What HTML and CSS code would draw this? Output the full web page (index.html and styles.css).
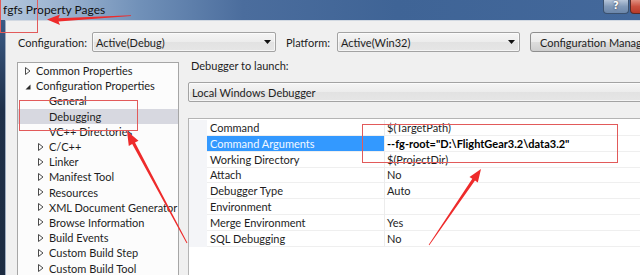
FILE: index.html
```html
<!DOCTYPE html>
<html lang="en">
<head>
    <meta charset="UTF-8">
    <meta name="viewport" content="width=device-width, initial-scale=1.0">
    <title>fgfs Property Pages</title>
    <link rel="stylesheet" href="styles.css">
</head>
<body>
<div class="window">

    <!-- Title bar -->
    <div class="titlebar">
        <span class="title">fgfs Property Pages</span>
        <div class="caption-buttons">
            <span class="btn-help">?</span>
            <span class="btn-close"></span>
        </div>
    </div>

    <div class="frame">
        <div class="dialog">

            <!-- Configuration / platform row -->
            <div class="config-row">
                <span class="config-label">Configuration:</span>
                <div class="combo combo-config">
                    <span class="combo-text">Active(Debug)</span>
                    <svg class="drop" width="7" height="4" viewBox="0 0 7 4"><path d="M0 0H7L3.5 4Z" fill="#111"/></svg>
                </div>
                <span class="platform-label">Platform:</span>
                <div class="combo combo-platform">
                    <span class="combo-text">Active(Win32)</span>
                    <svg class="drop" width="7" height="4" viewBox="0 0 7 4"><path d="M0 0H7L3.5 4Z" fill="#111"/></svg>
                </div>
                <button class="config-manager">Configuration Manager...</button>
            </div>

            <div class="main">
                <!-- Property tree -->
                <ul class="tree">
                    <li class="node lvl0"><span class="twisty"><svg width="6" height="8" viewBox="0 0 6 8"><path d="M0.5 0.5L5 4L0.5 7.5Z" fill="none" stroke="#4a4a4a"/></svg></span>Common Properties</li>
                    <li class="node lvl0"><span class="twisty open"><svg width="6" height="6" viewBox="0 0 6 6"><path d="M5.5 0.5V5.5H0.5Z" fill="#2a2a2a"/></svg></span>Configuration Properties</li>
                    <li class="node lvl1"><span class="twisty"></span>General</li>
                    <li class="node lvl1 selected"><span class="twisty"></span>Debugging</li>
                    <li class="node lvl1"><span class="twisty"></span>VC++ Directories</li>
                    <li class="node lvl1"><span class="twisty"><svg width="6" height="8" viewBox="0 0 6 8"><path d="M0.5 0.5L5 4L0.5 7.5Z" fill="none" stroke="#4a4a4a"/></svg></span>C/C++</li>
                    <li class="node lvl1"><span class="twisty"><svg width="6" height="8" viewBox="0 0 6 8"><path d="M0.5 0.5L5 4L0.5 7.5Z" fill="none" stroke="#4a4a4a"/></svg></span>Linker</li>
                    <li class="node lvl1"><span class="twisty"><svg width="6" height="8" viewBox="0 0 6 8"><path d="M0.5 0.5L5 4L0.5 7.5Z" fill="none" stroke="#4a4a4a"/></svg></span>Manifest Tool</li>
                    <li class="node lvl1"><span class="twisty"><svg width="6" height="8" viewBox="0 0 6 8"><path d="M0.5 0.5L5 4L0.5 7.5Z" fill="none" stroke="#4a4a4a"/></svg></span>Resources</li>
                    <li class="node lvl1"><span class="twisty"><svg width="6" height="8" viewBox="0 0 6 8"><path d="M0.5 0.5L5 4L0.5 7.5Z" fill="none" stroke="#4a4a4a"/></svg></span>XML Document Generator</li>
                    <li class="node lvl1"><span class="twisty"><svg width="6" height="8" viewBox="0 0 6 8"><path d="M0.5 0.5L5 4L0.5 7.5Z" fill="none" stroke="#4a4a4a"/></svg></span>Browse Information</li>
                    <li class="node lvl1"><span class="twisty"><svg width="6" height="8" viewBox="0 0 6 8"><path d="M0.5 0.5L5 4L0.5 7.5Z" fill="none" stroke="#4a4a4a"/></svg></span>Build Events</li>
                    <li class="node lvl1"><span class="twisty"><svg width="6" height="8" viewBox="0 0 6 8"><path d="M0.5 0.5L5 4L0.5 7.5Z" fill="none" stroke="#4a4a4a"/></svg></span>Custom Build Step</li>
                    <li class="node lvl1"><span class="twisty"><svg width="6" height="8" viewBox="0 0 6 8"><path d="M0.5 0.5L5 4L0.5 7.5Z" fill="none" stroke="#4a4a4a"/></svg></span>Custom Build Tool</li>
                </ul>

                <!-- Debugging page -->
                <div class="page">
                    <div class="launch-label">Debugger to launch:</div>
                    <div class="combo combo-debugger">
                        <span class="combo-text">Local Windows Debugger</span>
                    </div>
                    <div class="grid">
                        <div class="grid-row"><span class="gutter"></span><span class="name">Command</span><span class="value">$(TargetPath)</span></div>
                        <div class="grid-row active"><span class="gutter"></span><span class="name">Command Arguments</span><span class="value">--fg-root="D:\FlightGear3.2\data3.2"</span></div>
                        <div class="grid-row"><span class="gutter"></span><span class="name">Working Directory</span><span class="value">$(ProjectDir)</span></div>
                        <div class="grid-row"><span class="gutter"></span><span class="name">Attach</span><span class="value">No</span></div>
                        <div class="grid-row"><span class="gutter"></span><span class="name">Debugger Type</span><span class="value">Auto</span></div>
                        <div class="grid-row"><span class="gutter"></span><span class="name">Environment</span><span class="value"></span></div>
                        <div class="grid-row"><span class="gutter"></span><span class="name">Merge Environment</span><span class="value">Yes</span></div>
                        <div class="grid-row"><span class="gutter"></span><span class="name">SQL Debugging</span><span class="value">No</span></div>
                    </div>
                </div>
            </div>
        </div>
    </div>

    <!-- Red annotation marks drawn over the screenshot -->
    <svg class="marks" width="640" height="275" viewBox="0 0 640 275">
        <g fill="none" stroke="#e25a5a" stroke-width="1">
            <rect x="0.5" y="-2" width="37" height="34.5"/>
            <rect x="19.5" y="100.5" width="118" height="30"/>
            <rect x="362.5" y="124.5" width="255" height="38"/>
        </g>
        <g fill="#ee2b2b">
            <polygon points="47,19.5 60,14.5 58.5,18.2 131,15.3 131,16.1 58.5,21.6 60,25"/>
            <polygon points="127,131 138.5,140.8 135,142.6 187.4,242.8 186.6,243.2 132.2,144.1 128.8,146"/>
            <polygon points="481,169 477.8,182.6 475,180.6 429.3,245.2 428.7,244.8 472.3,178.8 469.5,176.9"/>
        </g>
    </svg>
</div>
</body>
</html>
```

FILE: styles.css
```css
/* General */
* {
    box-sizing: border-box;
}

body {
    margin: 0;
    font-family: Lato, "Noto Sans", sans-serif;
    font-size: 11px;
    color: #1e1e1e;
    background: #f0f0f0;
}

.window {
    position: relative;
    width: 640px;
    height: 275px;
    overflow: hidden;
    display: flex;
    flex-direction: column;
}

/* Title bar */
.titlebar {
    flex: none;
    height: 20px;
    display: flex;
    align-items: flex-start;
    background: linear-gradient(90deg, #b4c7dd 0%, #9ab2cf 10%, #7090b8 22%, #4b6d9d 38%, #3f6496 62%, #43689b 100%);
}

.title {
    margin: 3px 0 0 3px;
    font-size: 12px;
    line-height: 14px;
    color: #111;
}

.caption-buttons {
    margin-left: auto;
    margin-right: -33px;
    display: flex;
    gap: 1px;
}

.btn-help {
    width: 26px;
    height: 14px;
    border: 1px solid #3b516e;
    border-top: none;
    border-radius: 0 0 4px 4px;
    background: linear-gradient(#b6c5d9, #8199b8 50%, #6b86aa);
    color: #fff;
    font-family: "DejaVu Sans", sans-serif;
    font-weight: bold;
    font-size: 10px;
    line-height: 12px;
    text-align: center;
    text-shadow: 0 0 2px #223;
}

.btn-close {
    width: 43px;
    height: 14px;
    border: 1px solid #5a2a26;
    border-top: none;
    border-radius: 0 0 4px 4px;
    background: linear-gradient(#e08f80, #c9503f 50%, #b73a28);
}

/* Window frame */
.frame {
    flex: 1;
    display: flex;
    padding-left: 5px;
    background: linear-gradient(#3b5b86, #1f3049 30%, #1c2b40);
}

.dialog {
    flex: 1;
    min-width: 0;
    border-left: 1px solid #9eacbf;
    border-top: 1px solid #d2d9e2;
    background: #f0f0f0;
}

/* Configuration row */
.config-row {
    display: flex;
    align-items: center;
    height: 20px;
    margin: 11px 0 0 12px;
}

.config-label {
    width: 74px;
    flex: none;
}

.platform-label {
    width: 51px;
    flex: none;
    margin-left: 10px;
}

.combo {
    flex: none;
    display: flex;
    align-items: center;
    height: 20px;
    padding: 0 4px 0 3px;
    border: 1px solid #a3a3a3;
    border-radius: 2px;
    background: linear-gradient(#f5f5f5, #ececec 50%, #e2e2e2 51%, #e6e6e6);
    box-shadow: inset 0 0 0 1px rgba(255, 255, 255, 0.6);
}

.combo-text {
    flex: 1;
    white-space: nowrap;
}

.combo-config {
    width: 184px;
}

.combo-platform {
    width: 183px;
}

.config-manager {
    flex: none;
    width: 130px;
    height: 20px;
    margin-left: 10px;
    padding: 0 0 0 9px;
    text-align: left;
    font: inherit;
    color: inherit;
    white-space: nowrap;
    border: 1px solid #8e8e8e;
    border-radius: 3px;
    background: linear-gradient(#f4f4f4, #ebebeb 50%, #dddddd 51%, #cfcfcf);
}

/* Main area */
.main {
    display: flex;
    gap: 9px;
    margin: 10px 0 0 11px;
}

.tree {
    flex: none;
    width: 162px;
    height: 240px;
    margin: 0;
    padding: 0;
    list-style: none;
    border: 1px solid #a6a6a6;
    background: #fcfcfc;
}

.node {
    display: flex;
    align-items: center;
    height: 15.2px;
    white-space: nowrap;
}

.lvl0 {
    padding-left: 7px;
}

.lvl1 {
    padding-left: 20px;
}

.node.selected {
    background: #d7d8e0;
}

.twisty {
    width: 11px;
    flex: none;
    display: flex;
    align-items: center;
}

.twisty.open {
    padding-top: 3px;
}

/* Debugging page */
.page {
    flex: 1;
    min-width: 0;
}

.launch-label {
    margin: -3px 0 0 3px;
    line-height: 14px;
}

.combo-debugger {
    width: 470px;
    margin-top: 9px;
    padding-left: 3px;
}

.grid {
    width: 470px;
    height: 200px;
    margin-top: 16px;
    padding-top: 1px;
    border: 1px solid #b4b4b4;
    background: #fff;
}

.grid-row {
    display: grid;
    grid-template-columns: 18px 178px 1fr;
    height: 15.8px;
    line-height: 15px;
}

.gutter {
    background: #f4f5f8;
}

.name {
    padding-left: 3px;
    border-right: 1px solid #ececec;
    border-bottom: 1px solid #efefef;
    white-space: nowrap;
}

.value {
    padding-left: 2px;
    border-bottom: 1px solid #efefef;
    white-space: nowrap;
}

.grid-row.active .name {
    background: #3399ff;
    color: #f2f8ff;
}

.grid-row.active .value {
    font-weight: bold;
    color: #000;
}

/* Annotation overlay */
.marks {
    position: absolute;
    left: 0;
    top: 0;
    pointer-events: none;
}
```
